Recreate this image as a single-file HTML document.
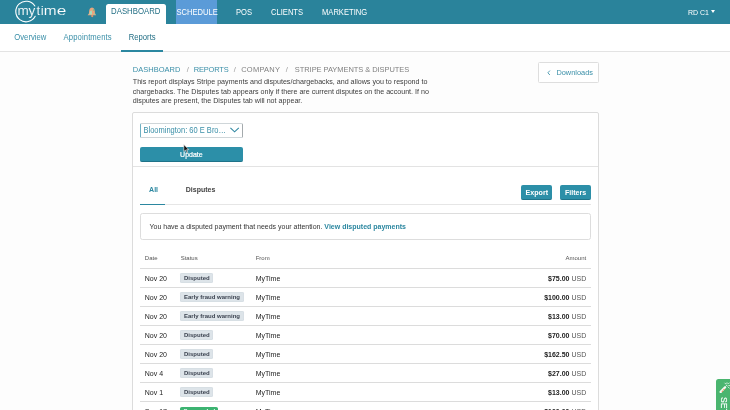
<!DOCTYPE html>
<html><head><meta charset="utf-8">
<style>
*{box-sizing:border-box;margin:0;padding:0}
body{will-change:transform}html,body{width:730px;height:410px;overflow:hidden;background:#fdfdfd;font-family:"Liberation Sans",sans-serif;color:#333}
.hdr{position:absolute;left:0;top:0;width:730px;height:24px;background:#2a839b}
.nav{position:absolute;top:0.6px;height:24px;line-height:23px;font-size:7.6px;color:#fff;white-space:nowrap;transform:scaleY(1.1)}
.dash{position:absolute;left:106px;top:4.2px;width:59.5px;height:21px;background:#fff;border-radius:2.5px 2.5px 0 0;color:#236f85;font-size:7.8px;line-height:16.6px;text-align:center;white-space:nowrap}
.dash span{display:inline-block;transform:scaleY(1.1)}
.sched{position:absolute;left:175.6px;top:0;width:41.8px;height:23.6px;background:#5b9bd8}
.sub{position:absolute;left:0;top:24px;width:730px;height:27.5px;background:#fff;border-bottom:1px solid #e3e3e3}
.sub span{position:absolute;top:1.4px;line-height:26.5px;font-size:7.7px;color:#3a8fa8;white-space:nowrap;transform:scaleY(1.1)}
.sub .ul{position:absolute;left:121px;top:25.9px;width:42.3px;height:2px;background:#2b87a0}
.bc{position:absolute;left:132.8px;top:64.8px;font-size:7.5px;line-height:10px;color:#808080;white-space:nowrap}
.bc span{position:absolute;top:0;transform:scaleY(1.08)}
.bc .l{color:#3a8fa8}
.bc .s{color:#999}
.desc{position:absolute;left:132.8px;top:78.1px;font-size:7.13px;line-height:9.4px;color:#3d3d3d;white-space:nowrap}
.dl{position:absolute;left:538px;top:62px;width:61px;height:21.2px;border:1px solid #dedede;border-radius:1.5px;background:#fff;font-size:7.4px;line-height:19.4px;color:#3a8fa8;padding-left:17.4px;white-space:nowrap}
.card{position:absolute;left:132px;top:112px;width:467px;height:320px;background:#fff;border:1px solid #dcdcdc;border-radius:2px}
.sel{position:absolute;left:140px;top:123.2px;width:102.6px;height:14.5px;border:1px solid #cfd6d9;border-left-color:#6fb0c2;border-right-color:#a4aaad;border-radius:1.5px;background:#fff;font-size:7.5px;line-height:13.6px;color:#3a8fa8;padding-left:2.5px;white-space:nowrap}
.sel span{display:inline-block;transform:scaleY(1.18)}
.upd{position:absolute;left:140px;top:147.2px;width:102.8px;height:14.5px;background:#2c8fa8;border-radius:2px;color:#fff;font-size:7px;line-height:16.6px;text-align:center;border-bottom:1px solid #1f7389;-webkit-text-stroke:0.2px #fff}
.hr1{position:absolute;left:133px;top:166px;width:465px;height:1px;background:#e3e3e3}
.tab{position:absolute;top:184.6px;font-size:7px;line-height:10px;font-weight:bold;white-space:nowrap}
.hr2{position:absolute;left:140px;top:204px;width:450.6px;height:1px;background:#e6e6e6}
.tul{position:absolute;left:140.3px;top:203.5px;width:25px;height:1.2px;background:#2b87a0}
.btn{position:absolute;top:185px;height:15px;background:#2c8fa8;border-radius:2px;color:#fff;font-size:7.1px;font-weight:bold;line-height:16.3px;text-align:center;border-bottom:1px solid #1f7389;white-space:nowrap}
.alert{position:absolute;left:140.2px;top:213.2px;width:450.8px;height:26.4px;border:1px solid #dddddd;border-radius:2.5px;font-size:7px;line-height:25.4px;padding-left:8.3px;color:#333;white-space:nowrap;background:#fff}
.alert b{color:#2b87a0}
.th{position:absolute;top:253px;font-size:6px;line-height:10px;color:#555;white-space:nowrap}
.row{position:absolute;left:140px;width:450.6px;height:19px;border-top:1px solid #dcdcdc;font-size:7px;line-height:19.4px;color:#222;white-space:nowrap}
.row span{position:absolute;top:0}
.row .d{left:4.8px}
.row .f{left:115.7px}
.row .a{right:4.4px;color:#555}
.row .a b{color:#222}
.row .bdg{left:40.3px;top:4.4px;height:9.4px;line-height:10px;font-size:6px;font-weight:bold;background:#dde4e9;color:#3c4350;border-radius:1.8px;padding:0 3.7px;box-shadow:inset 0 0 0 0.5px #d2dae0}
.row .g{background:#3cb371;color:#fff;top:5px;box-shadow:none;padding:0 3.2px;line-height:9px}
.side{position:absolute;left:715.9px;top:379px;width:20px;height:40px;background:#4ab56f;border-radius:2.5px 0 0 0}
</style></head><body>
<div class="hdr"></div>
<svg style="position:absolute;left:8px;top:0" width="70" height="24" viewBox="0 0 70 24">
<path d="M26.83 6.04 A10.3 10.3 0 1 0 27.19 16.34" fill="none" stroke="#fff" stroke-width="1.1" stroke-linecap="round"/>
<text x="9.5 20.4 28.6 32.7" y="15.3" font-family="Liberation Sans,sans-serif" font-size="13.5" fill="#fff" stroke="#2a839b" stroke-width="0.12">myti</text>
<text x="35.8" y="15.3" font-family="Liberation Sans,sans-serif" font-size="13.5" fill="#fff" stroke="#2a839b" stroke-width="0.12" textLength="12.8" lengthAdjust="spacingAndGlyphs">m</text>
<text x="48.7" y="15.3" font-family="Liberation Sans,sans-serif" font-size="13.5" fill="#fff" stroke="#2a839b" stroke-width="0.12" textLength="9.6" lengthAdjust="spacingAndGlyphs">e</text>
</svg>
<svg style="position:absolute;left:86.9px;top:6.5px" width="10" height="11" viewBox="0 0 10 11"><path d="M5 0.5 C2.9 0.6 2.2 2.6 2.1 4.6 L1.9 6.4 L0.6 8.2 L9.2 8.2 L8 6.4 L7.8 4.6 C7.7 2.6 7.1 0.6 5 0.5 Z" fill="#eaa57e"/><circle cx="5.2" cy="9.1" r="1.1" fill="#e8966a"/><path d="M3.2 4 L4.8 3.6 L5 7.4 L2.2 7.6 Z" fill="#9aeacb" opacity="0.85"/><circle cx="6.6" cy="3" r="0.7" fill="#5fc98f"/><circle cx="7.6" cy="6.9" r="0.7" fill="#7fdcae"/></svg>
<div class="dash"><span>DASHBOARD</span></div>
<div class="sched"></div>
<div class="nav" style="left:176.4px">SCHEDULE</div>
<div class="nav" style="left:236px">POS</div>
<div class="nav" style="left:271px">CLIENTS</div>
<div class="nav" style="left:322px">MARKETING</div>
<div class="nav" style="left:688px;font-size:7px">RD C1</div>
<div style="position:absolute;left:710.8px;top:10.4px;border-left:2.8px solid transparent;border-right:2.8px solid transparent;border-top:3.2px solid #fff"></div>
<div class="sub"><span style="left:14.3px">Overview</span><span style="left:63.6px;letter-spacing:0.1px">Appointments</span><span style="left:128.7px;color:#236f85">Reports</span><div class="ul"></div></div>
<div class="bc"><span class="l" style="left:0">DASHBOARD</span><span class="s" style="left:54px">/</span><span class="l" style="left:61px;letter-spacing:-0.2px">REPORTS</span><span class="s" style="left:101px">/</span><span style="left:108.4px;letter-spacing:0.24px">COMPANY</span><span class="s" style="left:153px">/</span><span style="left:162px;letter-spacing:-0.06px">STRIPE PAYMENTS &amp; DISPUTES</span></div>
<div class="desc">This report displays Stripe payments and disputes/chargebacks, and allows you to respond to<br>chargebacks. The Disputes tab appears only if there are current disputes on the account. If no<br>disputes are present, the Disputes tab will not appear.</div>
<div class="dl">Downloads</div>
<svg style="position:absolute;left:545px;top:68px" width="8" height="10" viewBox="0 0 8 10"><path d="M4.9 2.6 L2.9 4.8 L4.9 7" fill="none" stroke="#3a8fa8" stroke-width="0.85"/></svg>
<div class="card"></div>
<div class="sel"><span>Bloomington: 60 E Bro…</span></div>
<svg style="position:absolute;left:228px;top:125px" width="14" height="10" viewBox="0 0 14 10"><path d="M2.4 2.8 L6.6 6.8 L10.8 2.8" fill="none" stroke="#3389a3" stroke-width="1.1"/></svg>
<div class="upd">Update</div>
<svg style="position:absolute;left:183px;top:144px" width="7" height="10" viewBox="0 0 7 10"><path d="M0.8 0.6 L0.8 7.6 L2.5 6.1 L3.7 8.9 L4.8 8.4 L3.6 5.7 L5.8 5.6 Z" fill="#111" stroke="#fff" stroke-width="0.6"/></svg>
<div class="hr1"></div>
<div class="tab" style="left:149.1px;color:#2b87a0">All</div>
<div class="tab" style="left:185.8px;color:#444">Disputes</div>
<div class="hr2"></div><div class="tul"></div>
<div class="btn" style="left:521.2px;width:31.3px">Export</div>
<div class="btn" style="left:560.3px;width:30.6px">Filters</div>
<div class="alert">You have a disputed payment that needs your attention. <b>View disputed payments</b></div>
<div class="th" style="left:144.8px">Date</div><div class="th" style="left:180.7px">Status</div><div class="th" style="left:255.7px">From</div><div class="th" style="right:143.8px">Amount</div>
<div class="row" style="top:268px"><span class="d">Nov 20</span><span class="bdg">Disputed</span><span class="f">MyTime</span><span class="a"><b>$75.00</b> USD</span></div>
<div class="row" style="top:287px"><span class="d">Nov 20</span><span class="bdg">Early fraud warning</span><span class="f">MyTime</span><span class="a"><b>$100.00</b> USD</span></div>
<div class="row" style="top:306px"><span class="d">Nov 20</span><span class="bdg">Early fraud warning</span><span class="f">MyTime</span><span class="a"><b>$13.00</b> USD</span></div>
<div class="row" style="top:325px"><span class="d">Nov 20</span><span class="bdg">Disputed</span><span class="f">MyTime</span><span class="a"><b>$70.00</b> USD</span></div>
<div class="row" style="top:344px"><span class="d">Nov 20</span><span class="bdg">Disputed</span><span class="f">MyTime</span><span class="a"><b>$162.50</b> USD</span></div>
<div class="row" style="top:363px"><span class="d">Nov 4</span><span class="bdg">Disputed</span><span class="f">MyTime</span><span class="a"><b>$27.00</b> USD</span></div>
<div class="row" style="top:382px"><span class="d">Nov 1</span><span class="bdg">Disputed</span><span class="f">MyTime</span><span class="a"><b>$13.00</b> USD</span></div>
<div class="row" style="top:401px"><span class="d">Sep 17</span><span class="bdg g">Succeeded</span><span class="f">MyTime</span><span class="a"><b>$100.00</b> USD</span></div>
<div class="side"></div>
<svg style="position:absolute;left:719px;top:382px" width="11" height="11" viewBox="0 0 11 11"><path d="M1.7 9.9 L6.1 5.3" stroke="#f4fbf6" stroke-width="2.3" stroke-linecap="round"/><path d="M8 0.4 L8 2.2 M5.6 0.8 L6.9 2.1 M10.6 0.6 L9.2 2 M9.4 3.5 L11 3.7 M9 4.8 L10.4 6.4 M6.8 3 L8.6 4.2" stroke="#e0f4e7" stroke-width="0.9"/><circle cx="3.4" cy="9.2" r="0.75" fill="#f08650"/><circle cx="5" cy="7.4" r="0.75" fill="#f08650"/></svg>
<div style="position:absolute;left:727px;top:396.9px;transform-origin:0 0;transform:rotate(90deg);font-size:8.5px;line-height:7px;color:#fff;white-space:nowrap;letter-spacing:0.2px;-webkit-text-stroke:0.15px #fff">SET UP</div>
</body></html>
